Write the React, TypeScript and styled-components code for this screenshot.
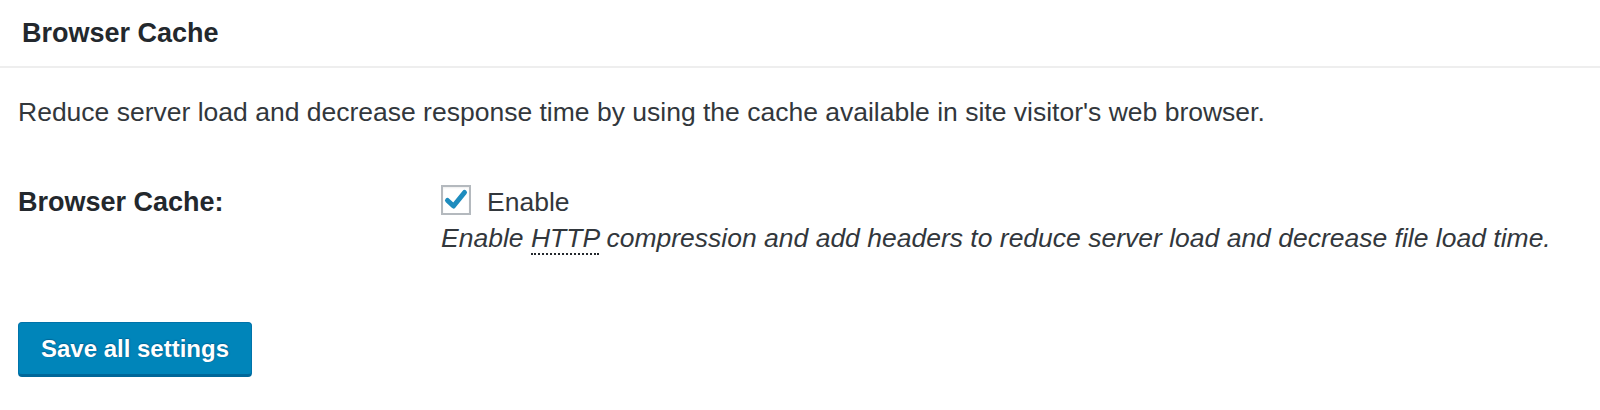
import React from "react";
import styled, { createGlobalStyle } from "styled-components";

const GlobalStyle = createGlobalStyle`
    html, body {
        margin: 0;
        padding: 0;
        background: #ffffff;
    }

    body {
        font-family: "Liberation Sans", Arial, Helvetica, sans-serif;
        color: #23282d;
        width: 1600px;
        height: 410px;
        overflow: hidden;
    }
`;

const Panel = styled.div`
    display: flex;
    flex-direction: column;
    width: 100%;
    background: #fff;
`;

const PanelHeader = styled.div`
    height: 66px;
    padding: 0 22px;
    display: flex;
    align-items: center;
    border-bottom: 2px solid #eeeeee;
`;

const PanelTitle = styled.h2`
    margin: 0;
    font-size: 27px;
    line-height: 66px;
    font-weight: 700;
    color: #23282d;
`;

const PanelBody = styled.div`
    padding: 26px 18px 0 18px;
`;

const Intro = styled.p`
    margin: 0;
    font-size: 26.5px;
    line-height: 36px;
    color: #32373c;
`;

const FormTable = styled.div`
    display: grid;
    grid-template-columns: 423px 1fr;
    margin-top: 54px;
`;

const FieldLabel = styled.div`
    font-size: 27px;
    line-height: 36px;
    font-weight: 700;
    color: #23282d;
`;

const FieldBody = styled.div`
    display: flex;
    flex-direction: column;
    padding-top: 1px;
`;

const CheckRow = styled.label`
    display: flex;
    align-items: center;
    gap: 16px;
    height: 30px;
    cursor: pointer;
`;

const CheckBox = styled.span<{ checked?: boolean }>`
    box-sizing: border-box;
    width: 30px;
    height: 30px;
    border: 2px solid #b4b9be;
    background: #fff;
    box-shadow: inset 0 1px 2px rgba(0, 0, 0, 0.07);
    display: flex;
    align-items: center;
    justify-content: center;
`;

const CheckText = styled.span`
    font-size: 26.5px;
    line-height: 30px;
    color: #32373c;
    padding-top: 3px;
`;

const Hint = styled.p`
    margin: 6px 0 0 0;
    font-size: 26.5px;
    line-height: 34px;
    font-style: italic;
    color: #32373c;
`;

const Abbr = styled.abbr`
    text-decoration: none;
    border-bottom: 2px dotted #23282d;
    cursor: help;
`;

const Actions = styled.div`
    margin-top: 67px;
`;

const PrimaryButton = styled.button`
    box-sizing: border-box;
    width: 234px;
    height: 55px;
    padding: 0;
    border: 1px solid #0073aa;
    border-bottom: 3px solid #006799;
    border-radius: 4px;
    background: #0085ba;
    color: #fff;
    font-family: "Liberation Sans", Arial, Helvetica, sans-serif;
    font-size: 24px;
    font-weight: 700;
    text-shadow: 0 -1px 1px #006799, 1px 0 1px #006799;
    cursor: pointer;
`;

const CheckMark = () => (
    <svg width="26" height="26" viewBox="0 0 26 26">
        <path d="M4.5 13.5 L10.5 19 L21.5 5.5" fill="none" stroke="#1e8cbe" strokeWidth="5" strokeLinecap="round" strokeLinejoin="round" />
    </svg>
);

export default function App() {
    return (
        <>
            <GlobalStyle />
            <Panel>
                <PanelHeader>
                    <PanelTitle>Browser Cache</PanelTitle>
                </PanelHeader>
                <PanelBody>
                    <Intro>
                        Reduce server load and decrease response time by using the cache available in site visitor's web browser.
                    </Intro>
                    <FormTable>
                        <FieldLabel>Browser Cache:</FieldLabel>
                        <FieldBody>
                            <CheckRow>
                                <CheckBox checked>
                                    <CheckMark />
                                </CheckBox>
                                <CheckText>Enable</CheckText>
                            </CheckRow>
                            <Hint>
                                Enable <Abbr title="Hypertext Transfer Protocol">HTTP</Abbr> compression and add headers to reduce server load and decrease file load time.
                            </Hint>
                        </FieldBody>
                    </FormTable>
                    <Actions>
                        <PrimaryButton>Save all settings</PrimaryButton>
                    </Actions>
                </PanelBody>
            </Panel>
        </>
    );
}
